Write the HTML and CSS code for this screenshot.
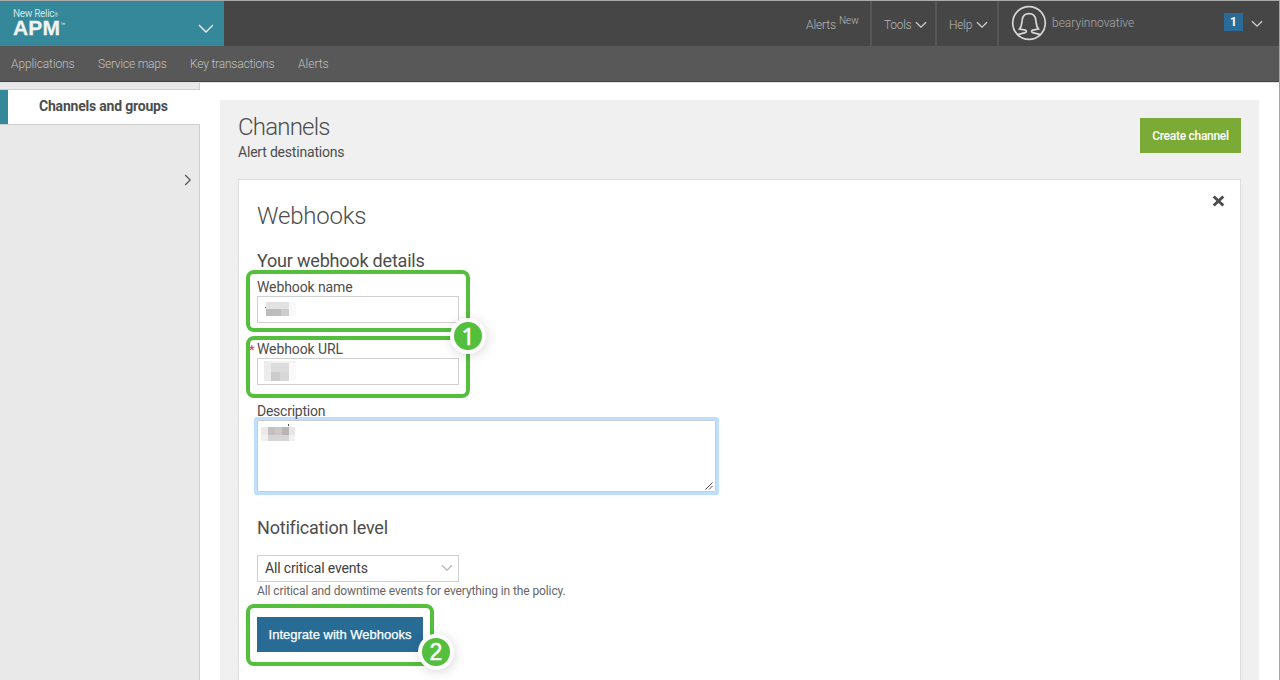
FILE: index.html
```html
<!DOCTYPE html>
<html lang="en">
<head>
<meta charset="utf-8">
<title>Channels and groups</title>
<link rel="stylesheet" href="styles.css">
</head>
<body>
<div class="app">
  <header class="topbar">
    <div class="brand">
      <div class="logo">
        <div class="logo-company">New Relic<span class="reg">®</span></div>
        <div class="logo-product">APM<span class="tm">™</span></div>
      </div>
      <svg class="brand-caret" width="16" height="10" viewBox="0 0 16 10"><path d="M1 1l7 7 7-7"/></svg>
    </div>
    <div class="spacer"></div>
    <div class="top-item alerts"><span>Alerts</span><span class="new">New</span></div>
    <div class="top-item tools"><span>Tools</span><svg width="12" height="8" viewBox="0 0 12 8"><path d="M1 1.2l5 5 5-5"/></svg></div>
    <div class="top-item help"><span>Help</span><svg width="12" height="8" viewBox="0 0 12 8"><path d="M1 1.2l5 5 5-5"/></svg></div>
    <div class="account">
      <svg class="avatar" width="36" height="36" viewBox="0 0 36 36"><circle cx="18" cy="18" r="16.3"/><path d="M6.500 29.600l7.800-1.900c1.500-.5 1.500-2.200 0-2.600l-5.800-1.100c2.500-2.700 2.200-6.100 2.700-9.200C11.800 10.600 14.200 8.600 18 8.600s6.200 2 6.800 6.200c.5 3.100.2 6.500 2.700 9.200l-5.800 1.100c-1.500.4-1.500 2.100 0 2.600l7.800 1.900"/></svg>
      <span class="username">bearyinnovative</span>
      <span class="count">1</span>
      <svg width="12" height="8" viewBox="0 0 12 8"><path d="M1 1.200l5 5 5-5"/></svg>
    </div>
  </header>
  <nav class="subnav">
    <a class="n1">Applications</a><a class="n2">Service maps</a><a class="n3">Key transactions</a><a class="n4">Alerts</a>
  </nav>
  <div class="body">
    <aside class="sidebar">
      <div class="side-top"></div>
      <div class="side-active">Channels and groups</div>
      <div class="side-rest"><svg width="8" height="12" viewBox="0 0 8 12"><path d="M1.200 1l5 5-5 5"/></svg></div>
    </aside>
    <main class="main">
      <div class="page-head">
        <div>
          <h1>Channels</h1>
          <p class="subtitle">Alert destinations</p>
        </div>
        <button class="create">Create channel</button>
      </div>
      <section class="panel">
        <div class="panel-head">
          <h2>Webhooks</h2>
          <svg class="close" width="13" height="12" viewBox="0 0 13 12"><path d="M1.700 1.500l9.600 9M11.300 1.500l-9.600 9"/></svg>
        </div>
        <h3 class="details">Your webhook details</h3>
        <div class="field">
          <label class="l-name">Webhook name</label>
          <div class="input"><svg width="38" height="22" viewBox="0 0 38 22"><path fill="#e2e2e2" d="M8 4h23v7H8z"/><path fill="#bcbcbc" d="M8 11h15v7H8z"/><path fill="#cdcdcd" d="M23 11h8v7h-8z"/><path fill="#f9f9f9" d="M31 4h7v14h-7z"/><path fill="#777" d="M7 9h1v1H7z"/></svg></div>
        </div>
        <div class="field">
          <label class="l-url"><span class="required">*</span>Webhook URL</label>
          <div class="input"><svg width="38" height="25" viewBox="0 0 38 25"><path fill="#ececec" d="M6 1h7v20H6z"/><path fill="#f3f3f3" d="M13 1h25v2H13z"/><path fill="#dcdcdc" d="M13 3h18v9H13z"/><path fill="#ccc" d="M13 12h9v9h-9z"/><path fill="#d8d8d8" d="M22 12h9v9h-9z"/><path fill="#fafafa" d="M31 3h7v18h-7z"/></svg></div>
        </div>
        <div class="field">
          <label class="l-desc">Description</label>
          <div class="textarea"><svg width="40" height="24" viewBox="0 0 40 24"><path fill="#eee8e6" d="M3 6h7v8H3z"/><path fill="#f1f1f1" d="M3 14h7v6H3zM31 14h6v6h-6z"/><path fill="#c4c0c0" d="M10 6h7v8h-7z"/><path fill="#cbc8c8" d="M17 6h7v8h-7z"/><path fill="#b9b5b7" d="M24 6h7v8h-7z"/><path fill="#e7e6e6" d="M31 6h6v8h-6z"/><path fill="#d6d5d5" d="M10 14h21v6H10z"/><path fill="#555" d="M30 3h1v2h-1z"/></svg>
            <svg class="grip" width="8" height="8" viewBox="0 0 8 8"><path d="M.5 7.500l7-7M4 7.500l3.500-3.500"/></svg></div>
        </div>
        <h3 class="level">Notification level</h3>
        <div class="select"><span>All critical events</span><svg width="12" height="8" viewBox="0 0 12 8"><path d="M1 1.200l5 5 5-5"/></svg></div>
        <p class="hint">All critical and downtime events for everything in the policy.</p>
        <button class="integrate">Integrate with Webhooks</button>
      </section>
    </main>
  </div>
  <div class="ring ring-name"></div>
  <div class="ring ring-url"></div>
  <div class="ring ring-submit"></div>
  <div class="step step-1">1</div>
  <div class="step step-2">2</div>
</div>
</body>
</html>
```
FILE: styles.css
```css
* { box-sizing: border-box; }
body { margin: 0; font-family: "Roboto", "Liberation Sans", sans-serif; color: #4d4d4d; background: #fff; }
h1, h2, h3, p { margin: 0; font-weight: 400; }
svg { display: block; flex: none; fill: none; }
button { border: 0; padding: 0; color: #fff; white-space: nowrap; }
.app { position: relative; width: 1280px; height: 680px; overflow: hidden; display: flex; flex-direction: column; border-top: 1px solid #aaa; border-right: 1px solid #a5a5a5; }

.topbar { height: 45px; flex: none; display: flex; background: #464646; color: #b8b8b8; font-weight: 300; }
.brand { width: 224px; background: #348899; display: flex; justify-content: space-between; padding: 7px 10px 0 13px; color: #f2f2f2; }
.logo-company { font-size: 10px; line-height: 12px; letter-spacing: -.3px; font-weight: 400; color: #cfe3e6; }
.reg { font-size: 5px; }
.logo-product { font: 700 21px/13px "Liberation Sans", sans-serif; letter-spacing: .2px; -webkit-text-stroke: .3px #f2f2f2; }
.tm { font-size: 5px; font-weight: 400; vertical-align: 9px; -webkit-text-stroke: 0; line-height: 1px; }
.brand-caret { margin-top: 16px; stroke: #f2f2f2; stroke-width: 1.3; }
.spacer { flex: 1; }
.top-item { display: flex; align-items: center; height: 45px; font-size: 12px; border-right: 2px solid #565656; padding-top: 2px; }
.top-item svg, .account > svg { stroke: #cfcfcf; stroke-width: 1.3; }
.alerts { width: 67px; gap: 3px; padding-left: 1px; letter-spacing: -.1px; }
.new { font-size: 10px; margin-top: -9px; }
.tools { width: 65px; padding-left: 12px; gap: 4px; letter-spacing: -.3px; }
.help { width: 62px; padding-left: 12px; gap: 4px; letter-spacing: -.2px; }
.account { width: 280px; display: flex; align-items: center; padding-left: 12px; font-size: 12px; }
.account .avatar { stroke: #d6d6d6; stroke-width: 1.700; margin-top: -2px; }
.username { width: 183px; padding-left: 5px; color: #a8a8a8; margin-top: -2px; }
.count { width: 19px; height: 18px; line-height: 18px; background: #2a6c97; color: #fff; text-align: center; font-weight: 700; margin: -4px 8px 0 -6px; }

.subnav { height: 36px; flex: none; background: #585858; border-bottom: 1px solid #424242; color: #c0c0c0; font-size: 12px; font-weight: 300; line-height: 37px; padding-left: 11px; display: flex; gap: 24px; white-space: nowrap; }
.n1 { width: 63px; letter-spacing: -.1px; }
.n2 { width: 68px; letter-spacing: -.2px; }
.n3 { width: 84px; letter-spacing: -.2px; }

.body { flex: 1; display: flex; min-height: 0; border-top: 1px solid #e2e2e2; }
.sidebar { width: 200px; flex: none; display: flex; flex-direction: column; }
.side-top { height: 7px; background: #e9e9e9; border-right: 1px solid #cfcfcf; border-bottom: 1px solid #cfcfcf; }
.side-active { height: 34px; border-left: 8px solid #348899; padding-left: 31px; font-size: 14px; letter-spacing: -.2px; font-weight: 700; line-height: 33px; white-space: nowrap; }
.side-rest { flex: 1; background: #e9e9e9; border: solid #cfcfcf; border-width: 1px 1px 0 0; display: flex; justify-content: flex-end; padding: 49px 7px 0 0; }
.side-rest svg { stroke: #555; stroke-width: 1.200; }

.main { width: 1039px; flex: none; margin: 17px 0 0 20px; background: #f0f0f0; padding: 0 18px; display: flex; flex-direction: column; }
.page-head { height: 79px; flex: none; display: flex; justify-content: space-between; padding-top: 11px; }
h1, h2 { font-size: 24px; font-weight: 300; line-height: 32px; white-space: nowrap; letter-spacing: -.2px; }
h1 { letter-spacing: -.8px; }
.subtitle { font-size: 14px; letter-spacing: -.2px; line-height: 18px; white-space: nowrap; }
.create { width: 101px; height: 35px; margin-top: 7px; background: #7caa36; font: 500 12px "Roboto", sans-serif; letter-spacing: -.28px; }

.panel { flex: 1; background: #fff; border: 1px solid #ddd; border-bottom: 0; padding: 20px 15px 0 18px; display: flex; flex-direction: column; align-items: flex-start; }
.panel-head { align-self: stretch; height: 49px; flex: none; display: flex; justify-content: space-between; }
h3 { font-size: 18px; line-height: 24px; white-space: nowrap; letter-spacing: -.2px; }
.details { margin-bottom: 5px; }
.close { margin-top: -5px; stroke: #4d4d4d; stroke-width: 3; }
.field { flex: none; margin-bottom: 17px; }
label { display: block; height: 18px; font-size: 14px; line-height: 18px; letter-spacing: -.1px; }
.l-desc { letter-spacing: -.25px; }
.required { color: #e0344a; font-size: 13px; display: inline-block; width: 8px; margin-left: -8px; }
.input { width: 202px; height: 27px; border: 1px solid #d0d0d0; background: #fff; overflow: hidden; padding-top: 1px; }
.textarea { width: 459px; height: 72px; border: 1px solid #ccc; box-shadow: 0 0 0 3px #bfdfff; border-radius: 1px; display: flex; justify-content: space-between; }
.grip { align-self: flex-end; margin: 0 2px 1px 0; stroke: #555; }
.level { margin: 7px 0 15px; }
.select { width: 202px; height: 27px; flex: none; border: 1px solid #d0d0d0; display: flex; align-items: center; justify-content: space-between; padding: 0 5px 1px 7px; font-size: 14px; letter-spacing: -.15px; color: #404040; }
.select svg { stroke: #bbb; stroke-width: 1.500; }
.hint { font-size: 12px; letter-spacing: -.1px; line-height: 18px; color: #666; margin-bottom: 17px; white-space: nowrap; }
.integrate { width: 166px; height: 35px; flex: none; background: #286c96; font: 400 13px "Liberation Sans", sans-serif; -webkit-text-stroke: .25px #fff; }

/* Callouts laid over the form */
.ring { position: absolute; left: 246px; width: 224px; height: 62px; border: 4px solid #54be3d; border-radius: 8px; }
.ring-name { top: 269px; }
.ring-url { top: 335px; }
.ring-submit { top: 603px; width: 188px; }
.step { position: absolute; width: 36px; height: 36px; border: 4px solid #fff; border-radius: 50%; background: #54be3d; color: #fff; text-align: center; font: 400 23px/28px "Noto Sans", sans-serif; -webkit-text-stroke: .5px #fff; box-shadow: 1px 2px 12px rgba(0,0,0,.15); }
.step-1 { left: 450px; top: 317px; }
.step-2 { left: 418px; top: 633px; font-family: "Liberation Sans", sans-serif; }
```
